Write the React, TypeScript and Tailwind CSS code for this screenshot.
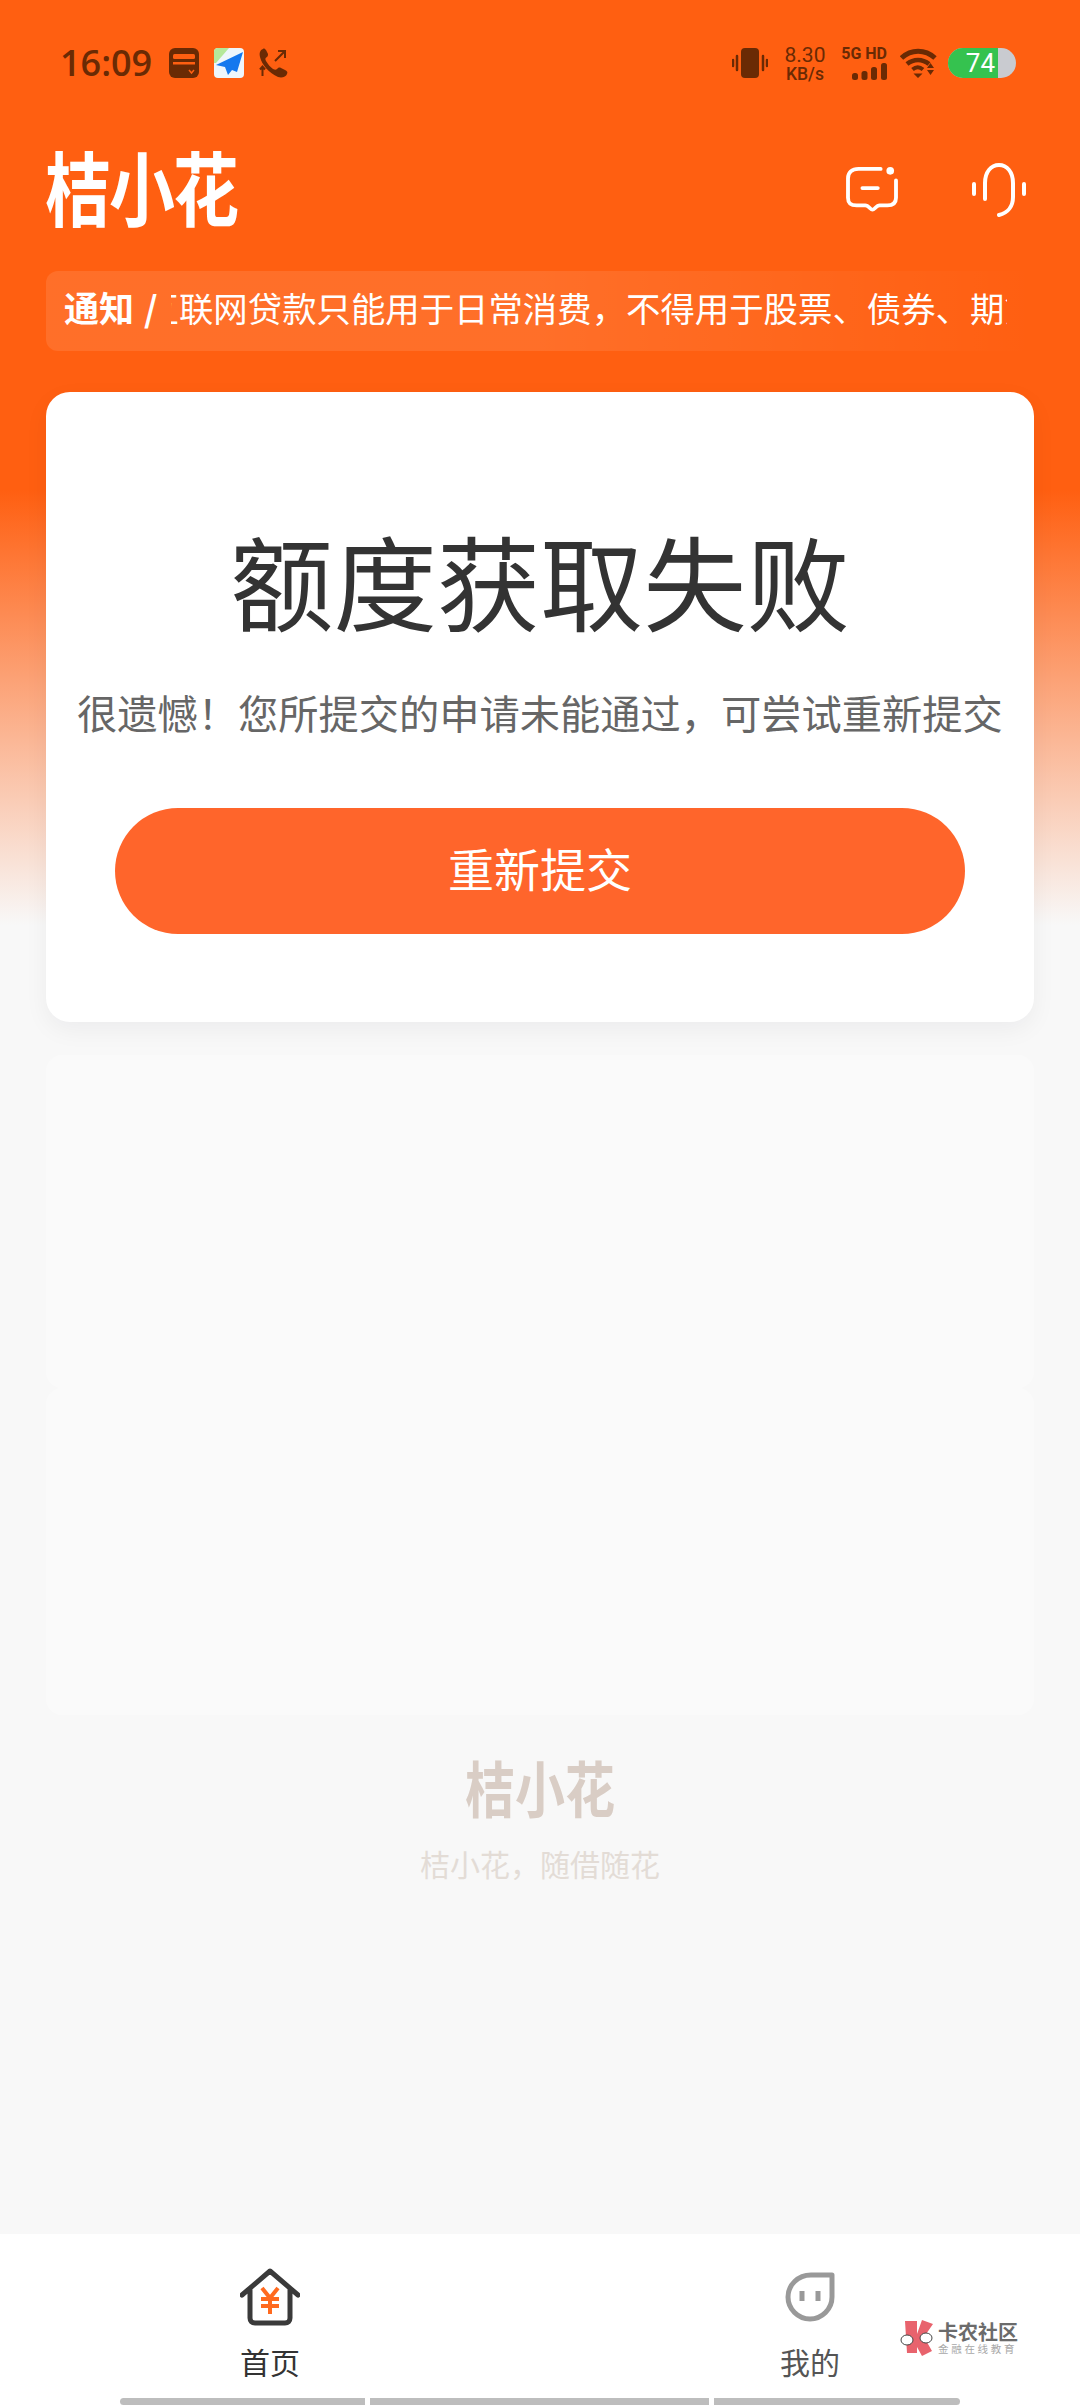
import React from 'react';

const cjk = 'font-["Noto_Sans_CJK_SC",sans-serif]';

const StatusLeft = () => (
  <div className="flex items-center">
    <span className="font-['Open_Sans',sans-serif] text-[36px] leading-none font-semibold text-[#6a2a04] w-[109px]">16:09</span>
    {/* wallet */}
    <svg width="30" height="30" viewBox="0 0 30 30">
      <rect width="30" height="30" rx="6" fill="#6a2a04" />
      <rect x="4" y="6" width="22" height="5" rx="1.5" fill="#ff5f11" />
      <rect x="4" y="14" width="22" height="2.5" fill="#ff5f11" />
      <path d="M20 22l2.500 3 2.500-3" fill="none" stroke="#ff5f11" strokeWidth="1.500" />
    </svg>
    {/* map app */}
    <svg width="30" height="30" viewBox="0 0 30 30" className="ml-[15px]">
      <rect width="30" height="30" rx="4" fill="#eef6fb" />
      <path d="M0 4a4 4 0 0 1 4-4h11L2 15H0z" fill="#b5e89a" />
      <path d="M29 4L2 17l9 2 3 8 4-5 5 2z" fill="#1478ee" />
    </svg>
    {/* phone */}
    <svg width="31" height="30" viewBox="0 0 31 30" className="ml-[14px]">
      <path d="M5 1c-3 1-4 4-3 8 2 8 9 16 18 20 4 1 8 0 9-3 1-2 0-3-2-4l-4-2c-2-1-3 0-4 1-1 1-2 1-4 0-3-2-5-5-7-8-1-2-1-3 1-4 1-1 1-2 1-3L8 2C7 1 6 0 5 1z" fill="#6a2a04" />
      <path d="M17 13l9-9M20 3h7v7" fill="none" stroke="#6a2a04" strokeWidth="2" />
      <path d="M4.500 28v-9M2 21.500l2.500-3 2.500 3" fill="none" stroke="#6a2a04" strokeWidth="2" />
    </svg>
  </div>
);

const StatusRight = () => (
  <div className="flex items-center text-[#6a2a04]">
    {/* vibrate */}
    <svg width="36" height="30" viewBox="0 0 36 30">
      <rect x="9" width="18" height="30" rx="4" fill="#6a2a04" />
      <path d="M5 8v14M1 12v6M31 8v14M35 12v6" stroke="#6a2a04" strokeWidth="2.500" strokeLinecap="round" />
    </svg>
    <div className="ml-[15px] w-[44px] flex flex-col items-center font-['Roboto',sans-serif]">
      <span className="text-[21px] leading-[21px]">8.30</span>
      <span className="text-[17.500px] leading-[16px] font-medium">KB/s</span>
    </div>
    <div className="ml-[12px] w-[48px] flex flex-col items-end font-['Roboto',sans-serif]">
      <span className="text-[16px] leading-[16px] font-bold whitespace-nowrap">5G HD</span>
      <svg width="35" height="17" viewBox="0 0 35 17" className="mt-[1px]">
        <rect x="0" y="10" width="6" height="7" rx="2.500" fill="#6a2a04" />
        <rect x="9.500" y="8" width="6" height="9" rx="2.500" fill="#6a2a04" />
        <rect x="19" y="4" width="6" height="13" rx="2.500" fill="#6a2a04" />
        <rect x="29" y="0" width="6" height="17" rx="2.500" fill="#6a2a04" />
      </svg>
    </div>
    {/* wifi */}
    <svg width="37" height="30" viewBox="0 0 37 30" className="ml-[13px]">
      <path d="M1.500 10C11 1 25 1 35 10" fill="none" stroke="#6a2a04" strokeWidth="5" />
      <path d="M7 16c6.500-5.500 15.500-5.500 22 0" fill="none" stroke="#6a2a04" strokeWidth="4.500" />
      <path d="M12.500 21.500c3.500-3 7-3 10.500 0" fill="none" stroke="#6a2a04" strokeWidth="4" />
      <path d="M13.500 25.500h9l-4.500 4.500zM30.500 15l3.500 5h-7zM27 22h7l-3.500 5z" fill="#6a2a04" />
    </svg>
    {/* battery */}
    <div className="ml-[11px] w-[68px] h-[30px] rounded-full overflow-hidden flex bg-[#c9cbd0]">
      <div className="w-[50px] bg-[#35c24f] flex items-center justify-end pr-[3px]">
        <span className="font-['Roboto',sans-serif] text-[26px] leading-none text-white">74</span>
      </div>
    </div>
  </div>
);

const HeaderIcons = () => (
  <div className="flex items-center">
    <svg width="52" height="48" viewBox="0 0 54 50" fill="none" stroke="#fff" strokeWidth="4" strokeLinecap="round" strokeLinejoin="round">
      <path d="M36 3H13C6 3 2 7 2 13v20c0 6 3 8 9 8h9c2 0 3 1 5 3 2 2 3 2 5 0 2-2 3-3 5-3h8c5 0 9-2 9-8V15" />
      <path d="M17 23h16" />
      <circle cx="46" cy="5" r="4" fill="#fff" stroke="none" />
    </svg>
    <svg width="54" height="54" viewBox="0 0 54 54" fill="none" stroke="#fff" strokeWidth="4" strokeLinecap="round" className="ml-[74px]">
      <path d="M13 36V20C13 9 19 2 27 2s14 7 14 18v14c0 9-5 16-14 18" />
      <path d="M2 21v10M52 21v10" />
    </svg>
  </div>
);

const HomeIcon = () => (
  <svg width="60" height="58" viewBox="0 0 60 58" fill="none">
    <path d="M2 27L30 3l28 24M10 22v28c0 3 2 5 5 5h30c3 0 5-2 5-5V22" stroke="#3a3a3a" strokeWidth="5" strokeLinecap="round" strokeLinejoin="round" />
    <path d="M22 20l8 10 8-10M21 31h18M21 38h18M30 30v16" stroke="#ff6a1f" strokeWidth="4" />
  </svg>
);

const MineIcon = () => (
  <svg width="50" height="50" viewBox="0 0 50 50" fill="none">
    <path d="M47 3H26C13 3 3 13 3 25s10 22 22 22 22-10 22-22z" stroke="#999" strokeWidth="5" strokeLinejoin="round" />
    <path d="M17 19v10M33 19v10" stroke="#999" strokeWidth="5" />
  </svg>
);

const Watermark = () => (
  <div className="absolute left-[900px] top-[86px] flex items-center">
    <svg width="36" height="36" viewBox="0 0 36 36">
      <path d="M5 1h12v13l5-14 11 4-9 13 8 14-10 5-5-9v6H7z" fill="#e8636d" />
      <ellipse cx="7" cy="20" rx="6" ry="5" fill="#fff" stroke="#444" strokeWidth="1" />
      <ellipse cx="26" cy="18" rx="6" ry="5" fill="#fff" stroke="#444" strokeWidth="1" />
    </svg>
    <div className={`ml-[2px] flex flex-col ${cjk}`}>
      <span className="text-[20px] leading-[21px] font-bold text-[#6b6b6b] whitespace-nowrap">卡农社区</span>
      <span className="text-[10.500px] leading-[14px] text-[#a8a8a8] tracking-[2.700px] whitespace-nowrap">金融在线教育</span>
    </div>
  </div>
);

const App: React.FC = () => {
  return (
    <div className={`w-[1080px] h-[2408px] flex flex-col overflow-hidden bg-[linear-gradient(180deg,#ff5f11_0px,#ff5f11_490px,#f8f8f8_925px,#f8f8f8_100%)] ${cjk}`}>
      {/* status bar */}
      <div className="h-[126px] shrink-0 pl-[60px] pr-[64px] flex items-center justify-between">
        <StatusLeft />
        <StatusRight />
      </div>

      {/* header */}
      <div className="h-[128px] shrink-0 pl-[45px] pr-[54px] flex items-center justify-between">
        <span className="text-[66px] leading-none font-bold text-white tracking-[-2px] whitespace-nowrap scale-y-[1.22] translate-y-[-5px]">桔小花</span>
        <HeaderIcons />
      </div>

      {/* notice */}
      <div className="mt-[17px] mx-[46px] h-[80px] shrink-0 rounded-[12px] flex items-center pl-[18px] pr-[27px] pb-[8px] bg-gradient-to-r from-white/10 via-white/10 to-white/0">
        <span className="text-[35px] font-bold text-white whitespace-nowrap">通知</span>
        <span className="ml-[10px] text-[35px] font-bold text-white">/</span>
        <div className="ml-[13px] flex-1 overflow-hidden">
          <div className="ml-[-26px] text-[34.400px] leading-[48px] text-white whitespace-nowrap">互联网贷款只能用于日常消费，不得用于股票、债券、期货等投资</div>
        </div>
      </div>

      {/* result card */}
      <div className="mt-[41px] mx-[46px] h-[630px] shrink-0 rounded-[24px] bg-white shadow-[0_8px_24px_rgba(0,0,30,0.05)] flex flex-col items-center pt-[127px]">
        <h1 className="text-[103.300px] leading-[120px] font-normal text-[#333] whitespace-nowrap">额度获取失败</h1>
        <p className="mt-[43px] text-[40.250px] leading-[60px] text-[#666] whitespace-nowrap">很遗憾！您所提交的申请未能通过，可尝试重新提交</p>
        <button className="mt-[66px] w-[850px] h-[126px] pb-[8px] rounded-full bg-[#ff652b] text-white text-[46px]">重新提交</button>
      </div>

      {/* empty panels */}
      <div className="mt-[33px] mx-[46px] h-[333px] shrink-0 rounded-[16px] bg-[#fafafa]" />
      <div className="mx-[46px] h-[327px] shrink-0 rounded-[16px] bg-[#fafafa]" />

      {/* footer brand */}
      <div className="mt-[41px] flex flex-col items-center">
        <span className="text-[50px] leading-[60px] font-bold text-[#d9cdc5] whitespace-nowrap scale-y-[1.22]">桔小花</span>
        <span className="mt-[27px] text-[30px] leading-[40px] text-[#e3dcd6] whitespace-nowrap">桔小花，随借随花</span>
      </div>

      {/* tab bar */}
      <div className="mt-auto relative h-[174px] shrink-0 bg-white flex flex-col">
        <div className="flex-1 flex">
          <div className="w-[540px] flex flex-col items-center pt-[34px]">
            <HomeIcon />
            <span className="mt-[15px] text-[30px] leading-[40px] text-[#333]">首页</span>
          </div>
          <div className="w-[540px] flex flex-col items-center pt-[38px]">
            <MineIcon />
            <span className="mt-[19px] text-[30px] leading-[40px] text-[#555]">我的</span>
          </div>
        </div>
        <div className="h-[7px] mb-[3px] pl-[120px] flex gap-[5px]">
          <div className="w-[245px] rounded-l-full bg-[#bdbdbd]" />
          <div className="w-[339px] bg-[#bdbdbd]" />
          <div className="w-[246px] rounded-r-full bg-[#bdbdbd]" />
        </div>
        <Watermark />
      </div>
    </div>
  );
};

export default App;
